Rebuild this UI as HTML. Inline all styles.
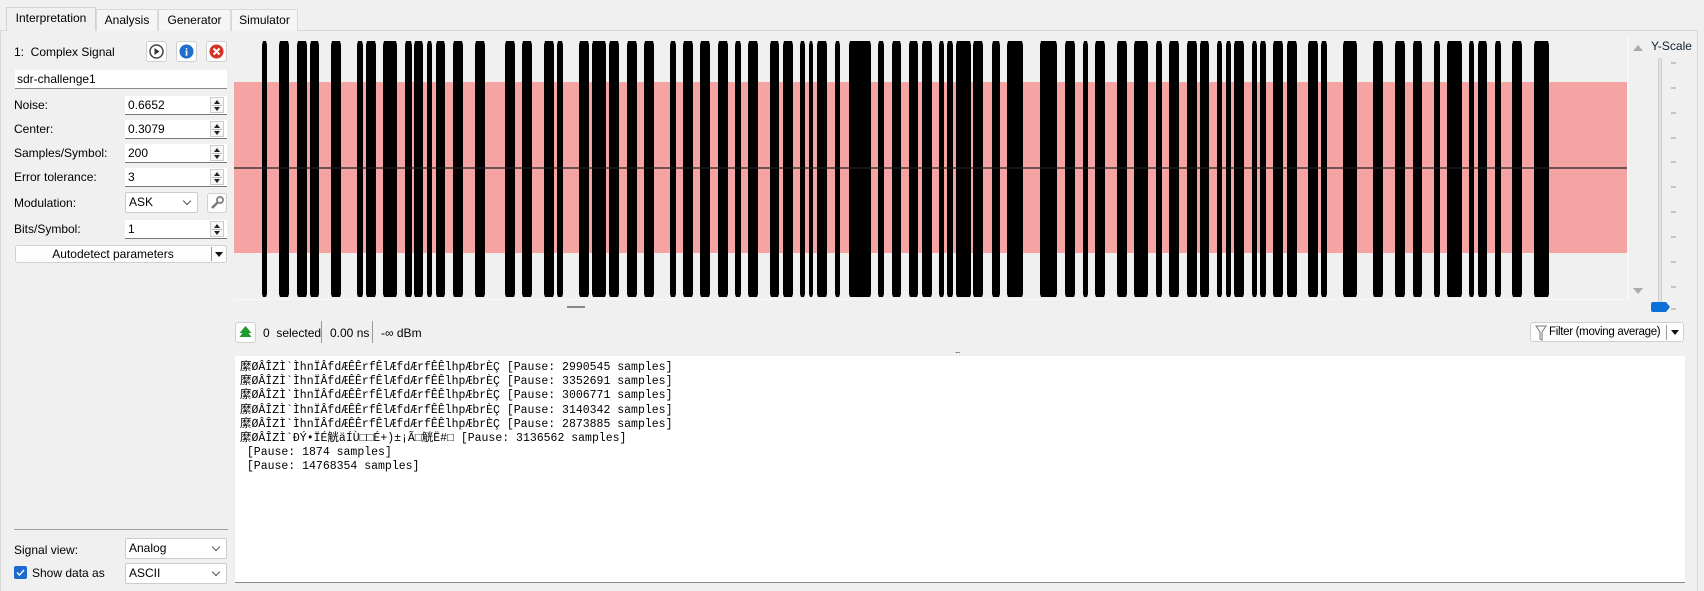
<!DOCTYPE html>
<html><head><meta charset="utf-8"><style>
*{box-sizing:border-box;margin:0;padding:0}
body{width:1704px;height:591px;background:#f0f0f0;font-family:"Liberation Sans",sans-serif;font-size:12px;color:#000;position:relative;overflow:hidden}
.a{position:absolute}
.tab{position:absolute;top:9px;height:22px;border:1px solid #d9d9d9;border-bottom:none;background:#f0f0f0;text-align:center;line-height:20px;font-size:12px}
.lbl{position:absolute;left:14px;font-size:12px}
.spin{position:absolute;left:125px;width:102px;height:19px;background:#fff;border-bottom:1px solid #777;font-size:12px;line-height:18px;padding-left:3px}
.sb{position:absolute;right:3px;top:1px;width:14px;height:16px;border:1px solid #ccc;background:#f7f7f7}
.sb:before{content:"";position:absolute;left:3px;top:2px;border-left:3px solid transparent;border-right:3px solid transparent;border-bottom:4px solid #222}
.sb:after{content:"";position:absolute;left:3px;top:9px;border-left:3px solid transparent;border-right:3px solid transparent;border-top:4px solid #222}
.sb i{position:absolute;left:1px;right:1px;top:7px;height:1px;background:#bbb}
.btn{position:absolute;background:#fdfdfd;border:1px solid #d0d0d0;border-radius:3px}
.combo{position:absolute;left:125px;width:102px;height:21px;background:#fff;border:1px solid #ccc;border-radius:2px;font-size:12px;line-height:19px;padding-left:3px}
.chev{position:absolute;right:7px;top:5px;width:6px;height:6px;border-right:1px solid #555;border-bottom:1px solid #555;transform:rotate(45deg)}
pre{font-family:"Liberation Mono","Noto Sans CJK SC",monospace;font-size:11.5px;line-height:14.2px;color:#000}
</style></head><body>
<div class="a" style="left:0;top:30px;width:1698px;height:561px;border:1px solid #d9d9d9;border-bottom:none;background:#f0f0f0"></div>
<div class="tab" style="left:6px;top:7px;height:24px;width:90px;background:#f0f0f0;border-color:#d0d0d0;z-index:2">Interpretation</div>
<div class="tab" style="left:96px;width:62px;background:#f5f5f5">Analysis</div>
<div class="tab" style="left:158px;width:73px;background:#f5f5f5">Generator</div>
<div class="tab" style="left:231px;width:67px;background:#f5f5f5">Simulator</div>

<div class="lbl" style="top:45px">1:&nbsp; Complex Signal</div>
<div class="btn" style="left:146px;top:41px;width:21px;height:21px"><svg width="19" height="19"><circle cx="9.5" cy="9.5" r="6.5" fill="#fff" stroke="#444" stroke-width="1.5"/><path d="M7.5 6v7l5-3.5z" fill="#333"/></svg></div>
<div class="btn" style="left:176px;top:41px;width:21px;height:21px"><svg width="19" height="19"><circle cx="9.5" cy="9.5" r="7" fill="#1f6fc8"/><text x="9.5" y="13.5" font-size="11" font-weight="bold" fill="#fff" text-anchor="middle" font-family="Liberation Serif">i</text></svg></div>
<div class="btn" style="left:206px;top:41px;width:21px;height:21px"><svg width="19" height="19"><circle cx="9.5" cy="9.5" r="7" fill="#d63226"/><path d="M6.5 6.5l6 6M12.5 6.5l-6 6" stroke="#fff" stroke-width="2"/></svg></div>
<div class="a" style="left:15px;top:70px;width:212px;height:19px;background:#fff;border-bottom:1px solid #888;padding-left:2px;line-height:18px">sdr-challenge1</div>

<div class="lbl" style="top:98px">Noise:</div><div class="spin" style="top:96px">0.6652<div class="sb"><i></i></div></div>
<div class="lbl" style="top:122px">Center:</div><div class="spin" style="top:120px">0.3079<div class="sb"><i></i></div></div>
<div class="lbl" style="top:146px">Samples/Symbol:</div><div class="spin" style="top:144px">200<div class="sb"><i></i></div></div>
<div class="lbl" style="top:170px">Error tolerance:</div><div class="spin" style="top:168px">3<div class="sb"><i></i></div></div>
<div class="lbl" style="top:196px">Modulation:</div>
<div class="combo" style="top:192px;width:73px">ASK<div class="chev"></div></div>
<div class="btn" style="left:207px;top:193px;width:20px;height:20px"><svg width="18" height="18"><path d="M4 14l6-6" stroke="#777" stroke-width="2.5"/><circle cx="12" cy="6" r="3" fill="none" stroke="#888" stroke-width="2"/></svg></div>
<div class="lbl" style="top:222px">Bits/Symbol:</div><div class="spin" style="top:220px">1<div class="sb"><i></i></div></div>
<div class="btn" style="left:15px;top:245px;width:212px;height:18px;line-height:16px;text-align:center;padding-right:16px;font-size:12px">Autodetect parameters<div class="a" style="right:14px;top:1px;width:1px;height:14px;background:#999"></div><div class="a" style="right:3px;top:6px;border-left:4px solid transparent;border-right:4px solid transparent;border-top:5px solid #111"></div></div>

<div class="a" style="left:14px;top:529px;width:214px;height:1px;background:#a0a0a0"></div>
<div class="lbl" style="top:543px">Signal view:</div>
<div class="combo" style="top:538px">Analog<div class="chev"></div></div>
<div class="a" style="left:14px;top:566px;width:13px;height:13px;background:#1d6bd0;border-radius:2px"><svg width="13" height="13"><path d="M3 6.5l2.5 2.5 4.5-5" fill="none" stroke="#fff" stroke-width="1.4"/></svg></div>
<div class="lbl" style="left:32px;top:566px">Show data as</div>
<div class="combo" style="top:563px">ASCII<div class="chev"></div></div>

<svg class="a" style="left:234px;top:38px" width="1395" height="262" viewBox="234 38 1395 262">
<rect x="234" y="38" width="1394" height="262" fill="#f0f0f0"/>
<rect x="234" y="82" width="1393" height="171" fill="#f6a3a3"/>
<g fill="#000" id="bars"></g>
<line x1="234" y1="168" x2="1627" y2="168" stroke="#222" stroke-width="1.2"/>
<line x1="1628" y1="38" x2="1628" y2="300" stroke="#fff" stroke-width="1"/>
<line x1="234" y1="300" x2="1628" y2="300" stroke="#fff" stroke-width="1"/>
</svg>
<script>
var b=[[262,267],[279,289],[297,307],[310,319],[331,341],[357,363],[366,376],[383,397],[405,412],[414,423],[427,432],[436,445],[453,463],[475,485],[505,515],[522,532],[544,554],[557,563],[579,589],[592,606],[609,619],[627,637],[644,654],[670,676],[683,693],[700,710],[718,728],[735,741],[748,758],[770,779],[783,793],[800,805],[809,813],[817,827],[835,840],[849,871],[878,884],[892,901],[909,918],[922,932],[939,944],[947,953],[956,971],[973,983],[992,1000],[1007,1023],[1040,1057],[1065,1075],[1083,1088],[1095,1105],[1117,1127],[1134,1148],[1156,1162],[1169,1179],[1187,1197],[1200,1209],[1217,1222],[1226,1231],[1234,1244],[1252,1257],[1260,1266],[1273,1283],[1287,1297],[1308,1318],[1321,1327],[1343,1357],[1373,1383],[1395,1405],[1413,1422],[1434,1440],[1447,1462],[1469,1474],[1478,1487],[1495,1501],[1512,1522],[1534,1549]];
var g=document.getElementById('bars'),s='';
b.forEach(function(p){s+='<path d="M'+p[0]+' 45L'+(p[0]+1)+' 41L'+(p[1]-1)+' 41L'+p[1]+' 45L'+p[1]+' 294L'+(p[1]-1)+' 297L'+(p[0]+1)+' 297L'+p[0]+' 294Z"/>';});
g.innerHTML=s;
</script>
<div class="a" style="left:567px;top:306px;width:18px;height:2px;background:#888"></div>

<div class="a" style="left:1633px;top:45px;border-left:5px solid transparent;border-right:5px solid transparent;border-bottom:6px solid #aaa"></div>
<div class="a" style="left:1633px;top:288px;border-left:5px solid transparent;border-right:5px solid transparent;border-top:6px solid #aaa"></div>
<div class="a" style="left:1651px;top:39px;font-size:12px;color:#123">Y-Scale</div>
<div class="a" style="left:1658px;top:58px;width:4px;height:250px;background:#e4e4e4;border:1px solid #ccc;border-radius:2px"></div>
<div class="a" style="left:1651px;top:302px;width:15px;height:10px;background:#0a6fd8;border-radius:2px 0 0 2px"></div>
<div class="a" style="left:1666px;top:302px;border-top:5px solid transparent;border-bottom:5px solid transparent;border-left:4px solid #0a6fd8"></div>
<svg class="a" style="left:1670px;top:60px" width="8" height="250"><g stroke="#999"><line x1="1" y1="3" x2="6" y2="3"/><line x1="1" y1="28" x2="6" y2="28"/><line x1="1" y1="53" x2="6" y2="53"/><line x1="1" y1="78" x2="6" y2="78"/><line x1="1" y1="102" x2="6" y2="102"/><line x1="1" y1="127" x2="6" y2="127"/><line x1="1" y1="152" x2="6" y2="152"/><line x1="1" y1="177" x2="6" y2="177"/><line x1="1" y1="202" x2="6" y2="202"/><line x1="1" y1="227" x2="6" y2="227"/><line x1="1" y1="249" x2="6" y2="249"/></g></svg>

<div class="btn" style="left:235px;top:322px;width:21px;height:21px"><svg width="19" height="19"><path d="M9.5 3l6 7h-3l3 4h-12l3-4h-3z" fill="#1e9a2e"/></svg></div>
<div class="a" style="left:263px;top:326px">0&nbsp; selected</div>
<div class="a" style="left:321px;top:321px;width:1px;height:22px;background:#999"></div>
<div class="a" style="left:330px;top:326px">0.00 ns</div>
<div class="a" style="left:372px;top:321px;width:1px;height:22px;background:#999"></div>
<div class="a" style="left:381px;top:326px">-∞ dBm</div>
<div class="btn" style="left:1530px;top:322px;width:154px;height:20px;line-height:18px;padding-left:18px;font-size:11.5px;letter-spacing:-0.3px;white-space:nowrap">Filter (moving average)
<svg class="a" style="left:4px;top:2px" width="12" height="16"><path d="M1 1h10l-4 6v8l-2-1v-7z" fill="none" stroke="#777"/></svg>
<div class="a" style="right:16px;top:2px;width:1px;height:15px;background:#999"></div><div class="a" style="right:4px;top:7px;border-left:4px solid transparent;border-right:4px solid transparent;border-top:5px solid #111"></div></div>
<div class="a" style="left:955px;top:345px;font-size:9px;letter-spacing:-1px;color:#444">...</div>

<div class="a" style="left:235px;top:356px;width:1450px;height:227px;background:#fff;border-bottom:1px solid #888;padding:5px 0 0 5px">
<pre>縻ØÂÎZÌ`ÌhnÏÂfdÆÊÊrfÊlÆfdÆrfÊÊlhpÆbrÈÇ [Pause: 2990545 samples]
縻ØÂÎZÌ`ÌhnÏÂfdÆÊÊrfÊlÆfdÆrfÊÊlhpÆbrÈÇ [Pause: 3352691 samples]
縻ØÂÎZÌ`ÌhnÏÂfdÆÊÊrfÊlÆfdÆrfÊÊlhpÆbrÈÇ [Pause: 3006771 samples]
縻ØÂÎZÌ`ÌhnÏÂfdÆÊÊrfÊlÆfdÆrfÊÊlhpÆbrÈÇ [Pause: 3140342 samples]
縻ØÂÎZÌ`ÌhnÏÂfdÆÊÊrfÊlÆfdÆrfÊÊlhpÆbrÈÇ [Pause: 2873885 samples]
縻ØÂÎZÌ`ÐÝ•ÏÉ觥äÍÙ□□É+)±¡Ã□觥Ë#□ [Pause: 3136562 samples]
 [Pause: 1874 samples]
 [Pause: 14768354 samples]</pre>
</div>
</body></html>
